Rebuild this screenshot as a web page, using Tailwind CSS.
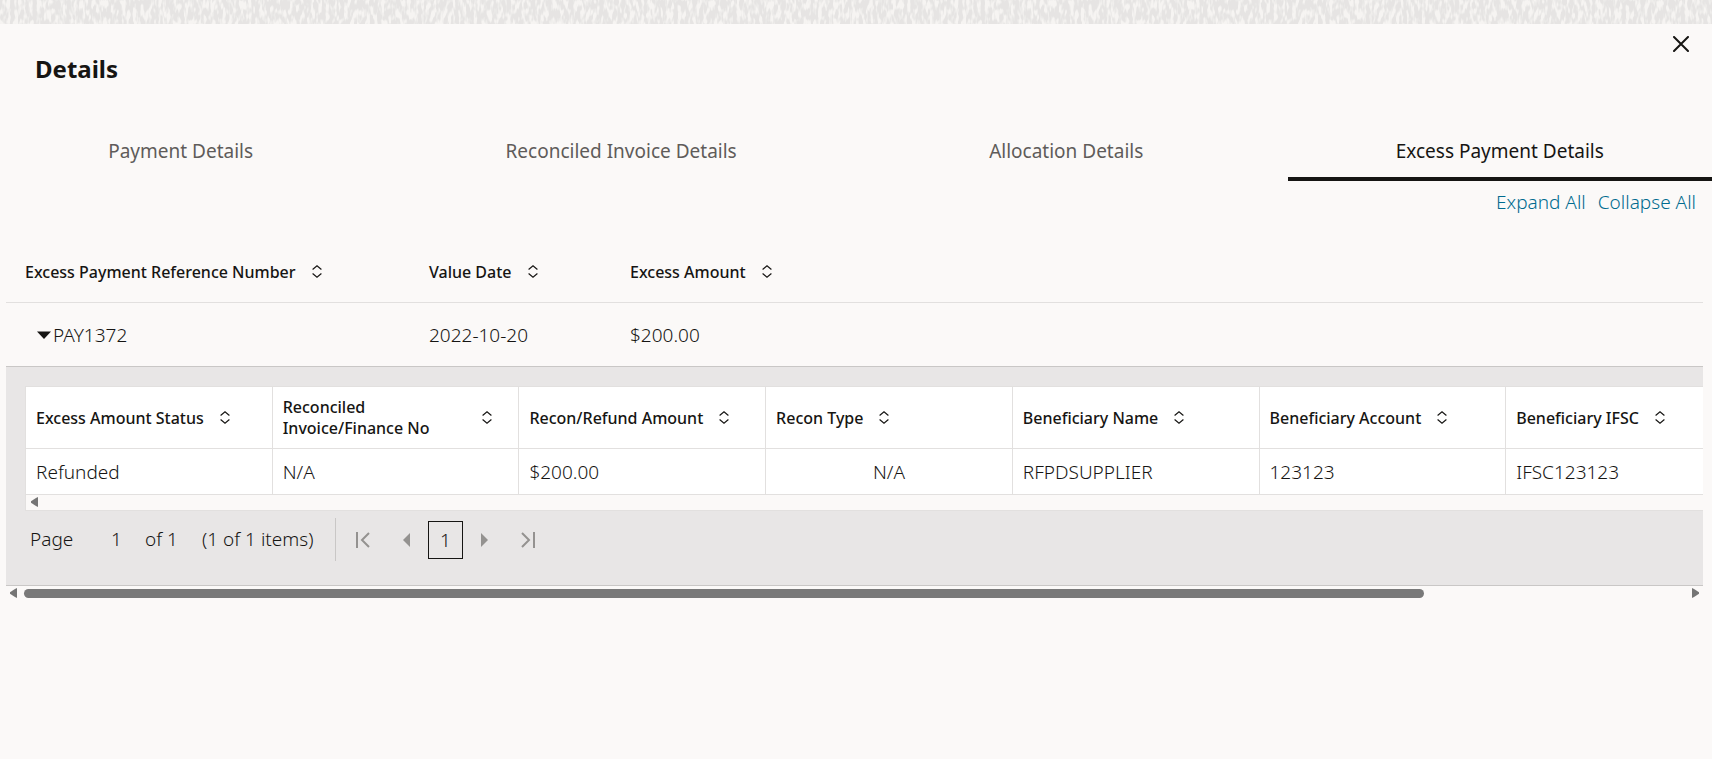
<!DOCTYPE html>
<html lang="en">
<head>
  <meta charset="UTF-8">
  <title>Details</title>
  <script src="https://cdn.jsdelivr.net/npm/@tailwindcss/browser@4"></script>
</head>
<body class="bg-[#fbf9f8] min-h-screen overflow-hidden font-['Noto_Sans','Open_Sans',sans-serif] text-[#161513]">

  <!-- shared icons -->
  <svg class="hidden">
    <symbol id="sort" viewBox="0 0 10 14">
      <path d="M.6 4.500 5 .8l4.400 3.700M.6 8.500 5 12.200l4.400-3.700" fill="none" stroke="currentColor" stroke-width="1.2" />
    </symbol>
    <symbol id="left" viewBox="0 0 7 10">
      <path d="M7 0v10L5 9 0 5.800v-1.600L5 1z" fill="currentColor" />
    </symbol>
    <symbol id="right" viewBox="0 0 7 10">
      <path d="M0 0v10l2-1 5-3.200v-1.600L2 1z" fill="currentColor" />
    </symbol>
  </svg>

  <!-- textured strip -->
  <div class="h-6 bg-[#f6f4f2] overflow-hidden">
    <svg class="w-full h-6">
      <filter id="grain" x="0" y="0" width="100%" height="100%" color-interpolation-filters="sRGB">
        <feTurbulence type="fractalNoise" baseFrequency="0.27 0.1" numOctaves="2" seed="4" />
        <feColorMatrix values="0 0 0 0 0.9  0 0 0 0 0.895  0 0 0 0 0.89  5 0 0 0 -1.8" />
      </filter>
      <rect width="100%" height="100%" filter="url(#grain)" />
    </svg>
  </div>

  <header class="flex justify-between pl-[35px] pr-[19px]">
    <h1 class="pt-[27px] text-2xl leading-9 font-bold">Details</h1>
    <button class="size-6 mt-2 grid place-items-center" aria-label="Close">
      <svg class="size-4" viewBox="0 0 16 16"><path d="M1 1l14 14M15 1 1 15" stroke="currentColor" stroke-width="2" stroke-linecap="round" /></svg>
    </button>
  </header>

  <nav class="flex gap-[36px] mt-9 text-[19px] leading-6 text-[#5f5c5a]">
    <button class="flex-auto pt-4 pb-[14px] border-b-4 border-transparent">Payment Details</button>
    <button class="flex-auto pt-4 pb-[14px] border-b-4 border-transparent">Reconciled Invoice Details</button>
    <button class="flex-auto pt-4 pb-[14px] border-b-4 border-transparent">Allocation Details</button>
    <button class="flex-auto pt-4 pb-[14px] border-b-4 border-[#161513] text-[#161513]">Excess Payment Details</button>
  </nav>

  <div class="flex justify-end gap-3 pt-[9px] pr-4 text-[19px] leading-6 font-light text-[#006b8f]">
    <a href="#">Expand All</a>
    <a href="#">Collapse All</a>
  </div>

  <main class="mt-7 ml-1.5 mr-[9px] overflow-hidden">
    <table class="w-full table-fixed text-left">
      <colgroup><col class="w-[404px]"><col class="w-[201px]"><col></colgroup>
      <thead class="text-base leading-5">
        <tr class="h-[60px] border-b border-[#e2e0df]">
          <th class="pl-[19px] font-medium"><button class="flex items-center gap-4">Excess Payment Reference Number <svg class="w-2.5 h-3.5"><use href="#sort" /></svg></button></th>
          <th class="pl-[19px] font-medium"><button class="flex items-center gap-4">Value Date <svg class="w-2.5 h-3.5"><use href="#sort" /></svg></button></th>
          <th class="pl-[19px] font-medium"><button class="flex items-center gap-4">Excess Amount <svg class="w-2.5 h-3.5"><use href="#sort" /></svg></button></th>
        </tr>
      </thead>
      <tbody class="text-[19px] leading-6 font-light">
        <tr class="h-16 border-b border-[#c9c7c6]">
          <td class="pt-0.5 pl-[31px]">
            <button class="flex items-center gap-[2px]"><svg class="w-3.5 h-2" viewBox="0 0 14 8"><path d="M0 .5h14L7 8z" fill="currentColor" /></svg>PAY1372</button>
          </td>
          <td class="pt-0.5 pl-[19px]">2022-10-20</td>
          <td class="pt-0.5 pl-[19px]">$200.00</td>
        </tr>
      </tbody>
    </table>

    <section class="h-[219px] pl-[19px] pt-[19px] bg-[#e8e6e6] border-b border-[#c9c7c6]">
      <table class="w-[1728px] table-fixed text-left bg-white border border-[#e2e0df]">
        <thead class="text-base leading-[21px]">
          <tr class="h-[62px] border-b border-[#e2e0df]">
            <th class="pt-0.5 px-2.5 border-r border-[#e2e0df] font-medium"><button class="flex items-center gap-4 text-left">Excess Amount Status <svg class="w-2.5 h-3.5"><use href="#sort" /></svg></button></th>
            <th class="pt-0.5 px-2.5 border-r border-[#e2e0df] font-medium"><button class="w-full flex items-center justify-between pr-4 text-left">Reconciled<br>Invoice/Finance No <svg class="w-2.5 h-3.5"><use href="#sort" /></svg></button></th>
            <th class="pt-0.5 px-2.5 border-r border-[#e2e0df] font-medium"><button class="flex items-center gap-4 text-left">Recon/Refund Amount <svg class="w-2.5 h-3.5"><use href="#sort" /></svg></button></th>
            <th class="pt-0.5 px-2.5 border-r border-[#e2e0df] font-medium"><button class="flex items-center gap-4 text-left">Recon Type <svg class="w-2.5 h-3.5"><use href="#sort" /></svg></button></th>
            <th class="pt-0.5 px-2.5 border-r border-[#e2e0df] font-medium"><button class="flex items-center gap-4 text-left">Beneficiary Name <svg class="w-2.5 h-3.5"><use href="#sort" /></svg></button></th>
            <th class="pt-0.5 px-2.5 border-r border-[#e2e0df] font-medium"><button class="flex items-center gap-4 text-left">Beneficiary Account <svg class="w-2.5 h-3.5"><use href="#sort" /></svg></button></th>
            <th class="pt-0.5 px-2.5 font-medium"><button class="flex items-center gap-4 text-left">Beneficiary IFSC <svg class="w-2.5 h-3.5"><use href="#sort" /></svg></button></th>
          </tr>
        </thead>
        <tbody class="text-[19px] leading-6 font-light">
          <tr class="h-[46px]">
            <td class="pt-0.5 px-2.5 border-r border-[#e2e0df]">Refunded</td>
            <td class="pt-0.5 px-2.5 border-r border-[#e2e0df]">N/A</td>
            <td class="pt-0.5 px-2.5 border-r border-[#e2e0df]">$200.00</td>
            <td class="pt-0.5 px-2.5 border-r border-[#e2e0df] text-center">N/A</td>
            <td class="pt-0.5 px-2.5 border-r border-[#e2e0df]">RFPDSUPPLIER</td>
            <td class="pt-0.5 px-2.5 border-r border-[#e2e0df]">123123</td>
            <td class="pt-0.5 px-2.5">IFSC123123</td>
          </tr>
        </tbody>
      </table>
      <div class="h-4 flex items-center pl-[5px] bg-[#fbf9f8] border-b border-l border-[#e2e0df]">
        <svg class="w-[7px] h-2.5 text-[#757575]"><use href="#left" /></svg>
      </div>

      <!-- pager -->
      <div class="flex items-center mt-[7px] pl-[5px] text-[19px] leading-6 font-light">
        <label for="page" class="w-[69px]">Page</label>
        <input id="page" class="w-[46px] pl-3 bg-transparent" value="1">
        <span class="w-[57px]">of 1</span>
        <span class="w-[133px]">(1 of 1 items)</span>
        <div class="flex items-center h-[43px] pt-0.5 border-l border-[#c9c7c6] text-[#949290]">
          <button class="ml-5" aria-label="First page"><svg class="w-3.5 h-4" viewBox="0 0 14 16" fill="none" stroke="currentColor" stroke-width="2"><path d="M1 0v16M13 1 6 8l7 7" /></svg></button>
          <button class="ml-[33px]" aria-label="Previous page"><svg class="w-[7px] h-3.5" viewBox="0 0 7 14"><path d="M7 0v14L0 7z" fill="currentColor" /></svg></button>
          <button class="ml-[18px] w-[35px] h-[38px] border border-[#161513] text-[#161513]">1</button>
          <button class="ml-[18px]" aria-label="Next page"><svg class="w-[7px] h-3.5" viewBox="0 0 7 14"><path d="M0 0v14l7-7z" fill="currentColor" /></svg></button>
          <button class="ml-[33px]" aria-label="Last page"><svg class="w-3.5 h-4" viewBox="0 0 14 16" fill="none" stroke="currentColor" stroke-width="2"><path d="M13 0v16M1 1l7 7-7 7" /></svg></button>
        </div>
      </div>
    </section>

    <!-- horizontal scrollbar -->
    <div class="flex items-center gap-[7px] h-[15px] px-1 text-[#757575]">
      <svg class="w-[7px] h-2.5"><use href="#left" /></svg>
      <div class="flex-1"><div class="h-[9px] w-[84.3%] rounded-full bg-[#797979]"></div></div>
      <svg class="w-[7px] h-2.5"><use href="#right" /></svg>
    </div>
  </main>

</body>
</html>
